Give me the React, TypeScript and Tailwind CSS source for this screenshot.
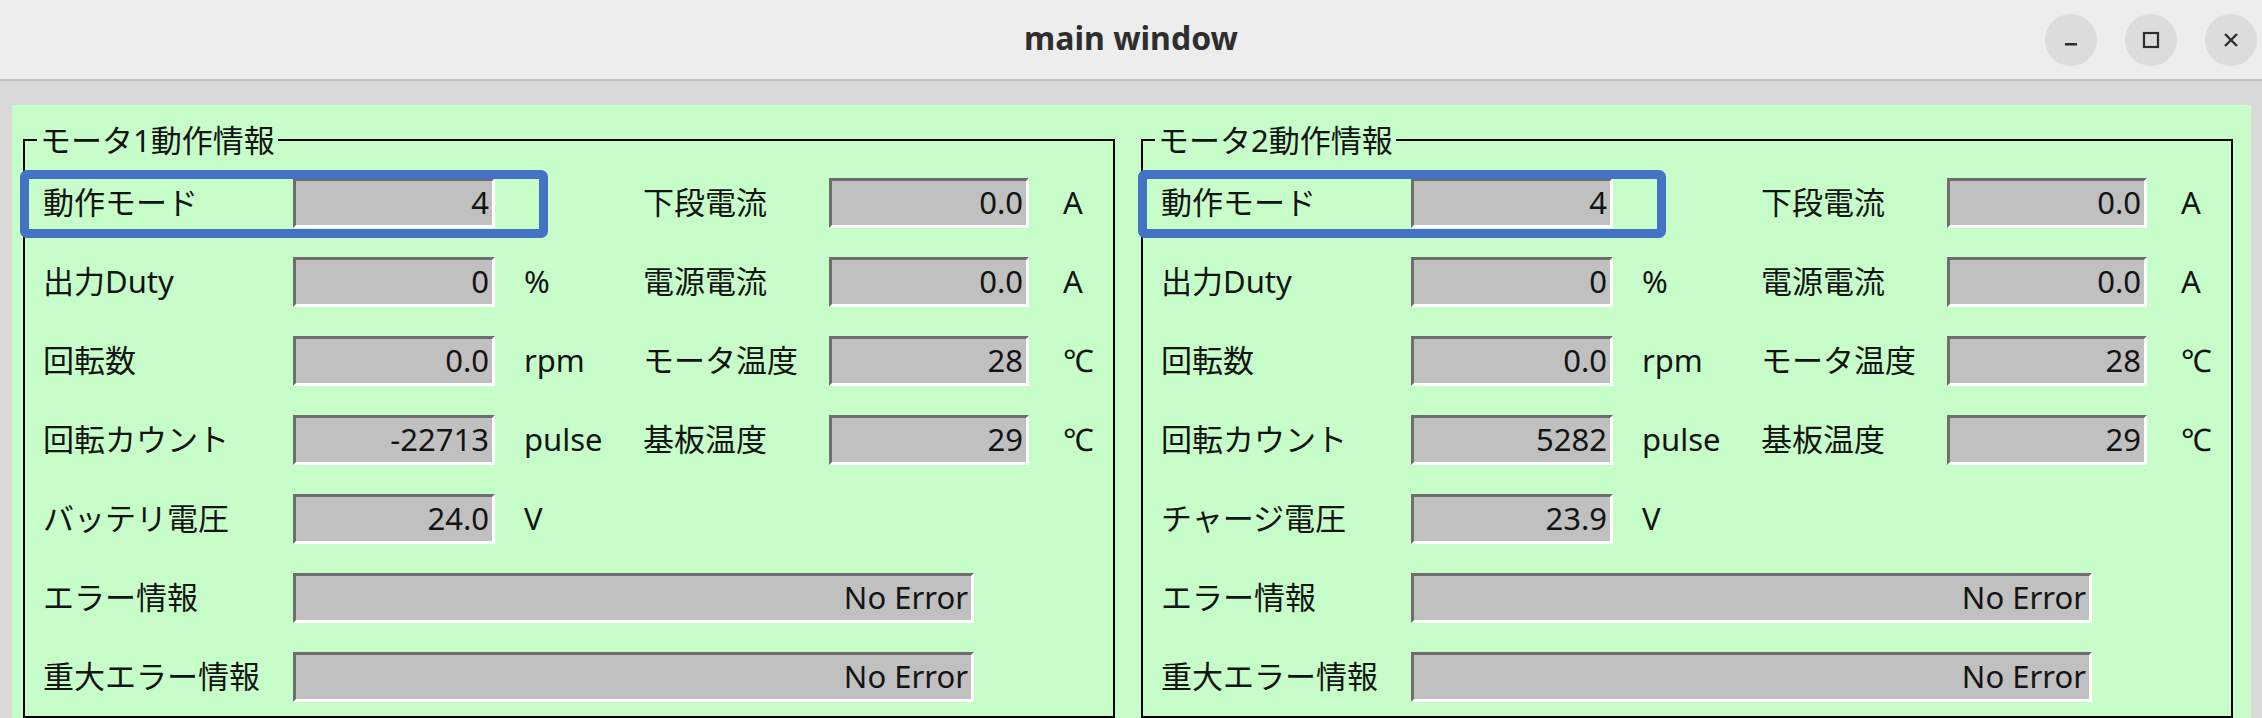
import React from 'react'

type Row = {
  label: string
  value: string
  unit?: string
  label2?: string
  value2?: string
  unit2?: string
  wide?: boolean
}

const motor1: Row[] = [
  { label: '動作モード', value: '4', label2: '下段電流', value2: '0.0', unit2: 'A' },
  { label: '出力Duty', value: '0', unit: '%', label2: '電源電流', value2: '0.0', unit2: 'A' },
  { label: '回転数', value: '0.0', unit: 'rpm', label2: 'モータ温度', value2: '28', unit2: '℃' },
  { label: '回転カウント', value: '-22713', unit: 'pulse', label2: '基板温度', value2: '29', unit2: '℃' },
  { label: 'バッテリ電圧', value: '24.0', unit: 'V' },
  { label: 'エラー情報', value: 'No Error', wide: true },
  { label: '重大エラー情報', value: 'No Error', wide: true },
]

const motor2: Row[] = [
  { label: '動作モード', value: '4', label2: '下段電流', value2: '0.0', unit2: 'A' },
  { label: '出力Duty', value: '0', unit: '%', label2: '電源電流', value2: '0.0', unit2: 'A' },
  { label: '回転数', value: '0.0', unit: 'rpm', label2: 'モータ温度', value2: '28', unit2: '℃' },
  { label: '回転カウント', value: '5282', unit: 'pulse', label2: '基板温度', value2: '29', unit2: '℃' },
  { label: 'チャージ電圧', value: '23.9', unit: 'V' },
  { label: 'エラー情報', value: 'No Error', wide: true },
  { label: '重大エラー情報', value: 'No Error', wide: true },
]

function ValueBox({ value, className }: { value: string; className: string }) {
  return (
    <div
      className={`${className} h-[50px] bg-[#c0c0c0] border-t-[3px] border-l-[3px] border-b-[3px] border-r-[3px] border-t-[#6e6e6e] border-l-[#6e6e6e] border-b-white border-r-white flex items-center justify-end pr-[3px] leading-none`}
    >
      {value}
    </div>
  )
}

function MotorFrame({ title, rows }: { title: string; rows: Row[] }) {
  return (
    <fieldset className="w-[1092px] border-2 border-black pl-[18px] pt-[8px] pb-0 pr-0 m-0">
      <legend className="-ml-[6px] px-[3px] leading-[30px]">{title}</legend>
      {rows.map((r, i) => (
        <div key={i} className="relative h-[79px] flex items-center">
          {i === 0 && (
            <div className="absolute left-[-23px] top-[7px] w-[528px] h-[68px] border-[9px] border-[#4472c4] rounded-[7px]" />
          )}
          <div className="w-[250px] leading-none">{r.label}</div>
          {r.wide ? (
            <ValueBox value={r.value} className="w-[681px]" />
          ) : (
            <>
              <ValueBox value={r.value} className="w-[202px]" />
              <div className="w-[148px] pl-[29px] leading-none">{r.unit}</div>
              {r.label2 && (
                <>
                  <div className="w-[186px] leading-none">{r.label2}</div>
                  <ValueBox value={r.value2 ?? ''} className="w-[200px]" />
                  <div className="pl-[34px] leading-none">{r.unit2}</div>
                </>
              )}
            </>
          )}
        </div>
      ))}
    </fieldset>
  )
}

export default function App() {
  return (
    <div className="w-[2262px] h-[718px] overflow-hidden bg-[#d9d9d9] flex flex-col text-[31px] text-[#141414] font-['Noto_Sans','Noto_Sans_CJK_JP',sans-serif]">
      <header className="h-[81px] shrink-0 bg-[#ededed] border-b-2 border-[#c4c4c4] grid grid-cols-[1fr_auto_1fr] items-center">
        <div />
        <div className="text-[32px] font-bold text-[#2e2e2e] font-['Noto_Sans',sans-serif] pb-[4px]">main window</div>
        <div className="flex justify-end gap-[28px] pr-[5px]">
          <button className="w-[52px] h-[52px] rounded-full bg-[#dcdcdc] flex items-center justify-center">
            <svg width="16" height="16" viewBox="0 0 16 16">
              <rect x="2" y="11" width="12" height="2.5" fill="#2e2e2e" />
            </svg>
          </button>
          <button className="w-[52px] h-[52px] rounded-full bg-[#dcdcdc] flex items-center justify-center">
            <svg width="18" height="18" viewBox="0 0 18 18">
              <rect x="2" y="2" width="14" height="14" fill="none" stroke="#2e2e2e" strokeWidth="2.2" />
            </svg>
          </button>
          <button className="w-[52px] h-[52px] rounded-full bg-[#dcdcdc] flex items-center justify-center">
            <svg width="18" height="18" viewBox="0 0 18 18">
              <path d="M3 3 L15 15 M15 3 L3 15" stroke="#2e2e2e" strokeWidth="2.4" />
            </svg>
          </button>
        </div>
      </header>
      <main className="flex-1 mt-[24px] ml-[12px] mr-[11px] bg-[#c6fdc8] pt-[20px] pl-[11px] flex gap-[26px]">
        <MotorFrame title="モータ1動作情報" rows={motor1} />
        <MotorFrame title="モータ2動作情報" rows={motor2} />
      </main>
    </div>
  )
}
